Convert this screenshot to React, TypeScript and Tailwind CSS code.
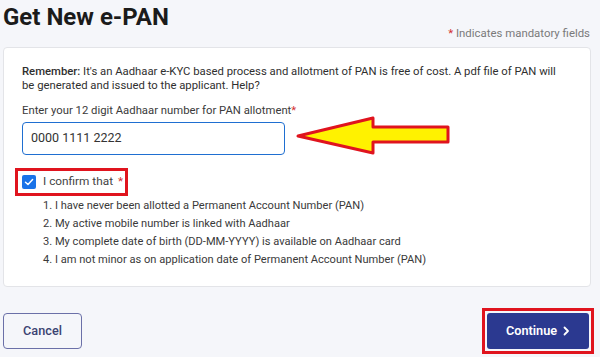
export default function App() {
  const items = [
    "I have never been allotted a Permanent Account Number (PAN)",
    "My active mobile number is linked with Aadhaar",
    "My complete date of birth (DD-MM-YYYY) is available on Aadhaar card",
    "I am not minor as on application date of Permanent Account Number (PAN)",
  ];

  return (
    <div className="relative w-[600px] h-[357px] overflow-hidden bg-[#f5f6fa] font-['Roboto',sans-serif] text-[#333]">
      {/* Header */}
      <div className="flex justify-between items-end h-[41px] pl-[3px] pr-[10px]">
        <h1 className="text-[24px] leading-[32px] font-bold text-[#1b1b1b] mb-[8px]">Get New e-PAN</h1>
        <div className="text-[11.4px] leading-4 text-[#7a7a7a]">
          <span className="text-[#d32f2f]">*</span> Indicates mandatory fields
        </div>
      </div>

      {/* Card */}
      <div className="mt-[6px] ml-[3px] w-[588px] h-[240px] bg-white border border-[#e3e4e8] rounded-[4px] pl-[18px] pr-[25px] pt-[17px]">
        <p className="text-[11.3px] leading-[14px] text-[#2f2f2f]">
          <b className="font-medium">Remember:</b> It's an Aadhaar e-KYC based process and allotment of PAN is free of cost. A pdf file of PAN will be generated and issued to the applicant. Help?
        </p>

        <div className="mt-[10px] text-[11.3px] leading-4 text-[#3a3a3a]">
          Enter your 12 digit Aadhaar number for PAN allotment<span className="text-[#d32f2f]">*</span>
        </div>

        <div className="mt-[3px] w-[263px] h-[33px] border border-[#1f6fd1] rounded-[4px] flex items-center pl-[8px] text-[12.5px] text-[#333]">
          0000 1111 2222
        </div>

        {/* Confirm checkbox with annotation */}
        <div className="mt-[13px] -ml-[7px] inline-flex items-center w-[113px] h-[28px] border-[3px] border-[#e0141e] pl-[4px]">
          <span className="w-[14px] h-[14px] rounded-[2px] bg-[#1a73e8] flex items-center justify-center">
            <svg width="10" height="10" viewBox="0 0 10 10" fill="none">
              <path d="M1.5 5.2 L4 7.5 L8.6 2.5" stroke="white" strokeWidth="1.5" strokeLinecap="round" strokeLinejoin="round" />
            </svg>
          </span>
          <span className="ml-[7px] text-[11.8px] text-[#444]">
            I confirm that <span className="text-[#d32f2f] ml-[2px]">*</span>
          </span>
        </div>

        <ol className="mt-[1px] pl-[21px] text-[11.1px] leading-[18px] text-[#3a3a3a]">
          {items.map((t, i) => (
            <li key={i}>
              {i + 1}. {t}
            </li>
          ))}
        </ol>
      </div>

      {/* Footer buttons */}
      <div className="flex justify-between items-center mt-[20px] pl-[3px] pr-[6px] h-[47px]">
        <button className="w-[79px] h-[36px] border border-[#6b70a8] rounded-[4px] text-[12.7px] font-medium text-[#3b4372]">
          Cancel
        </button>
        <div className="border-[3px] border-[#e0141e] p-[2px] bg-[#f5f6fa]">
          <button className="w-[102px] h-[36px] bg-[#2b3990] rounded-[3px] text-white text-[12.7px] font-semibold flex items-center justify-center gap-[6px]">
            Continue
            <svg width="7" height="10" viewBox="0 0 7 10" fill="none">
              <path d="M1.5 1.5 L5 5 L1.5 8.5" stroke="white" strokeWidth="1.8" strokeLinecap="round" strokeLinejoin="round" />
            </svg>
          </button>
        </div>
      </div>

      {/* Annotation arrow */}
      <svg className="absolute left-[290px] top-[110px]" width="166" height="50" viewBox="0 0 166 50" fill="none">
        <polygon
          points="8,26 83,8 83,17 158,17 158,32 83,32 83,43"
          fill="#fff200"
          stroke="#e0141e"
          strokeWidth="3"
          strokeLinejoin="round"
        />
      </svg>
    </div>
  );
}
